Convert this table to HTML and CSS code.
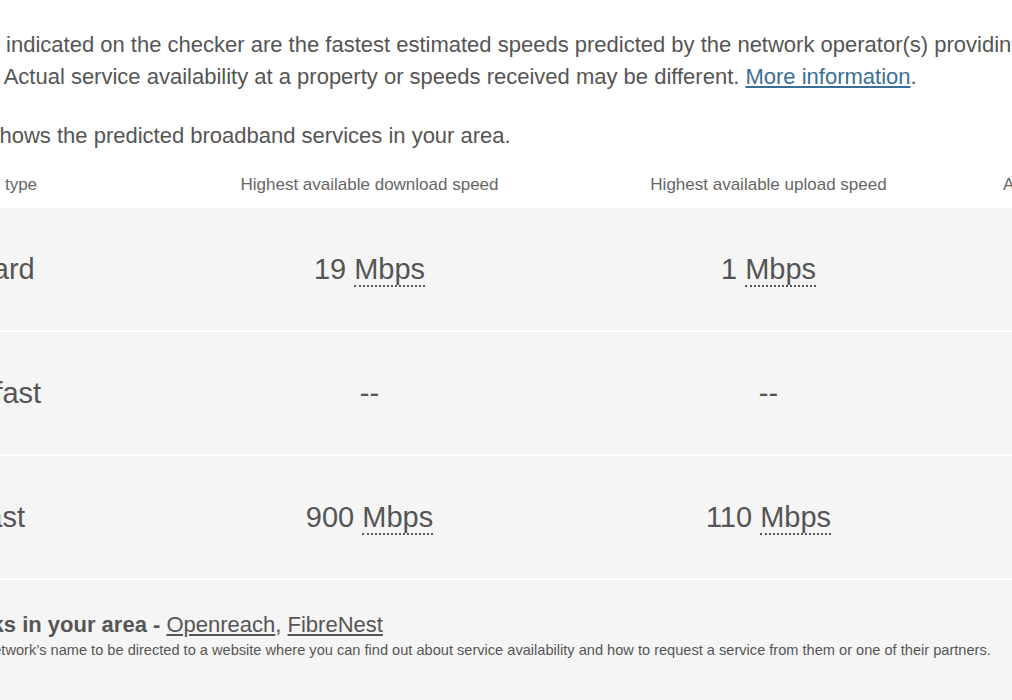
FILE: index.html
```html
<!DOCTYPE html>
<html lang="en">
<head>
<meta charset="utf-8">
<title>Broadband checker</title>
<link rel="stylesheet" href="styles.css">
</head>
<body>
<div class="page">
  <p class="intro">The speeds indicated on the checker are the fastest estimated speeds predicted by the network operator(s) providing services<br>in this area. Actual service availability at a property or speeds received may be different. <a class="info-link" href="#">More information</a>.</p>
  <p class="intro lead">This table shows the predicted broadband services in your area.</p>
  <div class="table">
    <div class="row head">
      <div class="cell first">Broadband type</div>
      <div class="cell">Highest available download speed</div>
      <div class="cell">Highest available upload speed</div>
      <div class="cell">Availability</div>
    </div>
    <div class="row body">
      <div class="cell first">Standard</div>
      <div class="cell">19 <span class="unit" title="Megabits per second">Mbps</span></div>
      <div class="cell">1 <span class="unit" title="Megabits per second">Mbps</span></div>
      <div class="cell"></div>
    </div>
    <div class="row body">
      <div class="cell first">Superfast</div>
      <div class="cell">--</div>
      <div class="cell">--</div>
      <div class="cell"></div>
    </div>
    <div class="row body">
      <div class="cell first">Ultrafast</div>
      <div class="cell">900 <span class="unit" title="Megabits per second">Mbps</span></div>
      <div class="cell">110 <span class="unit" title="Megabits per second">Mbps</span></div>
      <div class="cell"></div>
    </div>
  </div>
  <div class="networks">
    <p class="networks-line"><strong>Networks in your area - </strong><a class="net-link" href="#">Openreach</a>, <a class="net-link" href="#">FibreNest</a></p>
    <p class="networks-note">Click on a network’s name to be directed to a website where you can find out about service availability and how to request a service from them or one of their partners.</p>
  </div>
</div>
</body>
</html>
```

FILE: styles.css
```css
html, body {
  margin: 0;
  padding: 0;
  background: #ffffff;
  overflow: hidden;
}

body {
  font-family: "Liberation Sans", Arial, sans-serif;
  color: #555555;
}

.page {
  width: 1500px;
  margin-left: -115px;
  padding-top: 29px;
}

.intro {
  margin: 0 0 27px 0;
  font-size: 22px;
  line-height: 32px;
  white-space: nowrap;
}

.intro.lead {
  margin-bottom: 8px;
  padding-left: 2px;
}

.info-link {
  color: #3a6f95;
  text-decoration: underline;
}

.table {
  display: flex;
  flex-direction: column;
  padding-left: 2px;
}

.row {
  display: grid;
  grid-template-columns: 283px 399px 399px 150px;
  align-items: center;
  box-sizing: border-box;
}

.row.head {
  height: 48px;
  padding-top: 2px;
  background: #ffffff;
  font-size: 17px;
  color: #666666;
}

.row.body {
  height: 124px;
  background: #f5f5f5;
  font-size: 29px;
  border-top: 2px solid #ffffff;
}

.row.head + .row.body {
  border-top: 0;
  height: 122px;
}

.cell {
  text-align: center;
  white-space: nowrap;
}

.cell.first {
  text-align: left;
  padding-left: 30px;
}

.unit {
  border-bottom: 2px dotted #555555;
}

.networks {
  background: #f5f5f5;
  border-top: 2px solid #ffffff;
  padding: 31px 0 60px 32px;
}

.networks-line {
  margin: 0;
  font-size: 22px;
  line-height: 28px;
  white-space: nowrap;
}

.networks-line strong {
  font-weight: bold;
}

.net-link {
  color: #555555;
  text-decoration: underline;
}

.networks-note {
  margin: 2px 0 0 0;
  font-size: 14.6px;
  line-height: 18px;
  white-space: nowrap;
}
```
